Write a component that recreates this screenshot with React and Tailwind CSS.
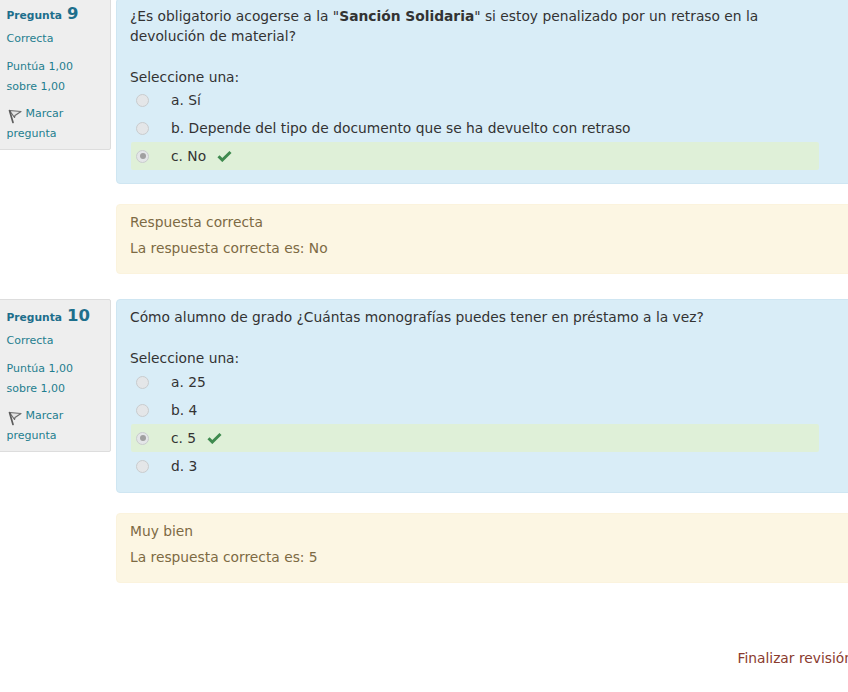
import React from 'react';

const font = { fontFamily: '"DejaVu Sans", Verdana, sans-serif' };

const Flag = () => (
    <svg width="15" height="15" viewBox="0 0 15 15" className="inline-block mr-[4px] -mb-[4px]" fill="none">
        <path d="M2.5 1.5 L14 2.5 L8 6.5 L7.5 8.5 Z" fill="#e6e6e6" stroke="#6b6b6b" strokeWidth="1.2" strokeLinejoin="round" />
        <path d="M2.5 1.5 L6 13.5" stroke="#5c5c5c" strokeWidth="1.7" strokeLinecap="round" />
    </svg>
);

const Check = () => (
    <svg width="15" height="12" viewBox="0 0 15 12" className="ml-[11px] mt-[-1px]">
        <path d="M1.5 6.2 L5.3 10 L13.5 2" fill="none" stroke="#3f8a4f" strokeWidth="3" />
    </svg>
);

const Radio = ({ checked }) => (
    <span className="w-[13px] h-[13px] rounded-full bg-[#e4e6e8] border border-[#c9ccce] flex items-center justify-center shrink-0">
        {checked && <span className="w-[6px] h-[6px] rounded-full bg-[#a0a0a0]" />}
    </span>
);

const Option = ({ label, correct }) => (
    <div className={`flex items-center h-[28px] w-[688px] ml-[1px] pl-[5px] ${correct ? 'bg-[#dff0d8] rounded-[2px]' : ''}`}>
        <Radio checked={correct} />
        <span className="ml-[22px]">{label}</span>
        {correct && <Check />}
    </div>
);

const InfoPanel = ({ number, panelClass }) => (
    <div className={`w-[121px] -ml-[10px] shrink-0 bg-[#eeeeee] border border-[#dddddd] rounded-[2px] pl-[15.5px] text-[11px] text-[#1f7e8f] self-start ${panelClass}`}>
        <div className="h-[20px] flex items-baseline font-bold text-[10.7px] text-[#1d6f8c]">
            Pregunta <span className="text-[16.5px] ml-[5px] leading-[20px]">{number}</span>
        </div>
        <div className="mt-[5px] leading-[20px]">Correcta</div>
        <div className="mt-[8px] leading-[20px]">Puntúa 1,00<br />sobre 1,00</div>
        <div className="mt-[7px] leading-[20px]"><Flag />Marcar<br />pregunta</div>
    </div>
);

const Feedback = ({ title, answer }) => (
    <div className="mt-[20px] h-[70px] bg-[#fcf6e3] border border-[#fbf3dd] rounded-[4px] pl-[13px] pt-[7px] text-[#7d6a43] leading-[20px]">
        <div>{title}</div>
        <div className="mt-[6px]">{answer}</div>
    </div>
);

const Question = ({ number, panelClass, children, options, feedbackTitle, answer, boxClass, optionsClass }) => (
    <div className="flex gap-[5px]">
        <InfoPanel number={number} panelClass={panelClass} />
        <div className="w-[760px] shrink-0">
            <div className={`bg-[#d9edf7] border border-[#cfe6f2] rounded-[4px] pl-[13px] pt-[7px] ${boxClass}`}>
                <div className="leading-[20px] w-[690px]">{children}</div>
                <div className="mt-[21px] leading-[20px]">Seleccione una:</div>
                <div className={optionsClass}>
                    {options.map((o) => <Option key={o.label} {...o} />)}
                </div>
            </div>
            <Feedback title={feedbackTitle} answer={answer} />
        </div>
    </div>
);

export default function App() {
    return (
        <div className="w-[848px] h-[692px] overflow-hidden bg-white text-[13.8px] text-[#333333]" style={font}>
            <div className="-mt-[2px]">
                <Question
                    number="9"
                    panelClass="h-[152px] pt-[5px]"
                    boxClass="h-[186px]"
                    optionsClass="-mt-[1px]"
                    feedbackTitle="Respuesta correcta"
                    answer="La respuesta correcta es: No"
                    options={[
                        { label: 'a. Sí' },
                        { label: 'b. Depende del tipo de documento que se ha devuelto con retraso' },
                        { label: 'c. No', correct: true },
                    ]}
                >
                    ¿Es obligatorio acogerse a la "<b>Sanción Solidaria</b>" si estoy penalizado por un retraso en la devolución de material?
                </Question>
                <div className="mt-[25px]">
                    <Question
                        number="10"
                        panelClass="h-[153px] pt-[6px]"
                        boxClass="h-[194px]"
                        feedbackTitle="Muy bien"
                        answer="La respuesta correcta es: 5"
                        options={[
                            { label: 'a. 25' },
                            { label: 'b. 4' },
                            { label: 'c. 5', correct: true },
                            { label: 'd. 3' },
                        ]}
                    >
                        Cómo alumno de grado ¿Cuántas monografías puedes tener en préstamo a la vez?
                    </Question>
                </div>
                <div className="mt-[65px] pl-[737.5px] whitespace-nowrap leading-[20px] text-[#8a3b2e]">Finalizar revisión</div>
            </div>
        </div>
    );
}
